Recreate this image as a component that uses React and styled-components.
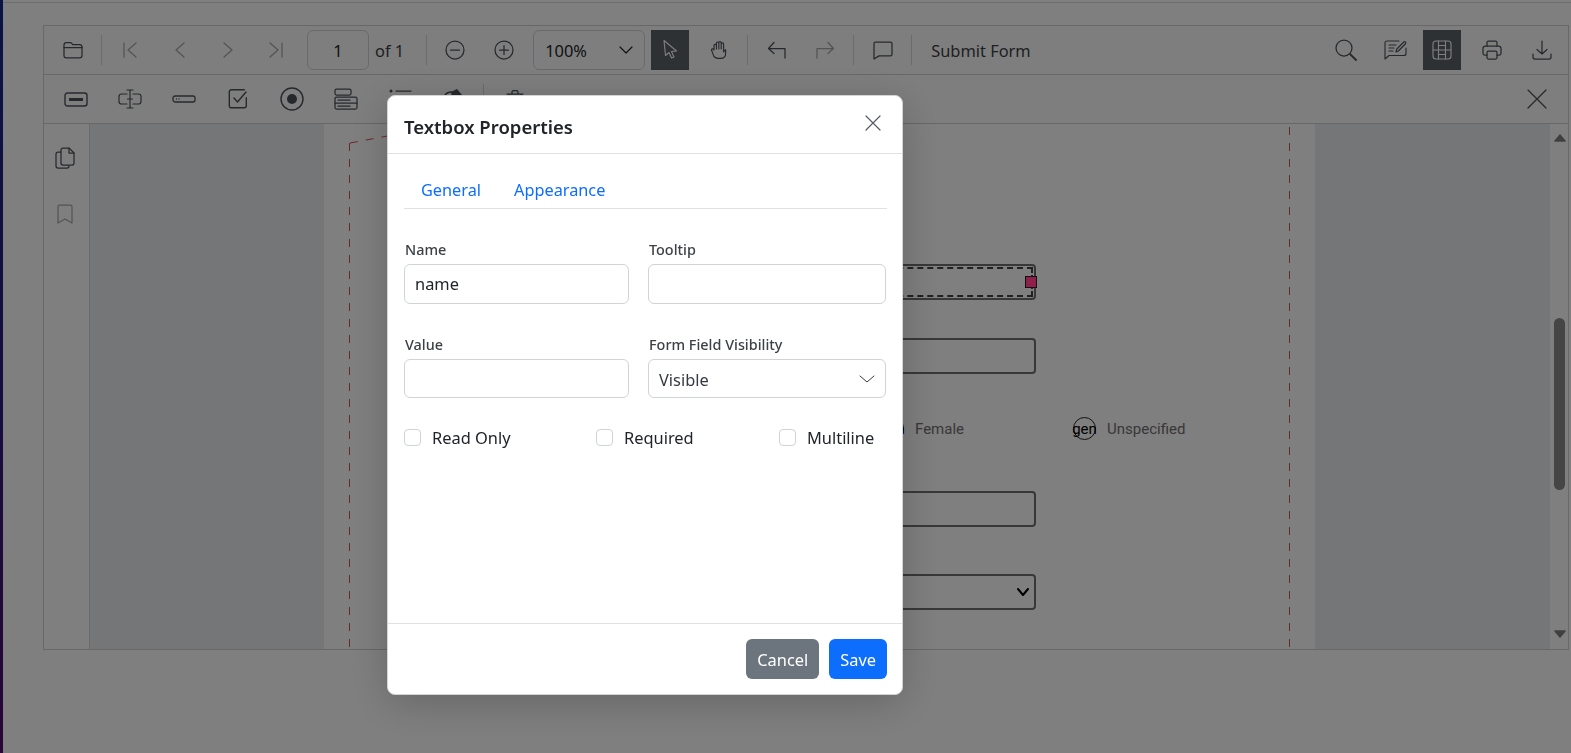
import React from 'react';
import styled, { createGlobalStyle } from 'styled-components';

const GlobalStyle = createGlobalStyle`
  html, body {
    margin: 0;
    height: 100%;
    overflow: hidden;
    background: #fff;
    font-family: "Noto Sans", "Open Sans", Arial, sans-serif;
    color: #212529;
  }
  * { box-sizing: border-box; }
`;

const Shell = styled.div`
  display: flex;
  height: 100vh;
`;

const Strip = styled.div`
  width: 3px;
  flex: none;
  background: linear-gradient(180deg, #14288c 0%, #2c1c80 50%, #500a6e 100%);
`;

const Main = styled.div`
  flex: 1;
  margin-top: 2px;
  border-top: 1px solid #dcdcdc;
  padding: 22px 2px 0 40px;
`;

const Viewer = styled.div`
  height: 625px;
  border: 1px solid #d0d0d0;
  display: flex;
  flex-direction: column;
  background: #fff;
`;

const Toolbar = styled.div`
  height: 49px;
  flex: none;
  display: flex;
  align-items: center;
  padding: 0 ${p => p.$right ?? 9}px 0 10px;
  border-bottom: 1px solid #d0d0d0;
  background: #fdfdfd;
`;

const Spacer = styled.div`
  flex: ${p => (p.$w ? `0 0 ${p.$w}px` : 1)};
`;

const ToolButton = styled.div`
  width: ${p => p.$w || 38}px;
  height: 40px;
  margin-left: ${p => p.$gap ?? 10}px;
  flex: none;
  display: flex;
  align-items: center;
  justify-content: center;
  color: ${p => (p.$active ? '#fff' : '#4c5359')};
  background: ${p => (p.$active ? '#5c6266' : 'transparent')};
  opacity: ${p => (p.$disabled ? 0.5 : 1)};
`;

const Divider = styled.div`
  width: 1px;
  height: 30px;
  flex: none;
  margin: 0 9px;
  background: #d6d6d6;
`;

const PageInput = styled.div`
  width: 62px;
  height: 40px;
  margin-left: 12px;
  border: 1px solid #ced4da;
  border-radius: 6px;
  display: flex;
  align-items: center;
  justify-content: center;
  font-size: 16.4px;
`;

const ToolText = styled.span`
  font-size: 16.4px;
  color: #3a3f44;
  margin-left: ${p => p.$gap || 0}px;
  white-space: nowrap;
`;

const ZoomSelect = styled.div`
  width: 112px;
  height: 40px;
  margin-left: 10px;
  padding: 0 11px 0 11px;
  border: 1px solid #ced4da;
  border-radius: 6px;
  display: flex;
  align-items: center;
  justify-content: space-between;
  font-size: 16.4px;
`;

const Content = styled.div`
  flex: 1;
  min-height: 0;
  display: flex;
`;

const SideBar = styled.div`
  width: 46px;
  flex: none;
  border-right: 1px solid #d6d6d6;
  display: flex;
  flex-direction: column;
  align-items: center;
  gap: 35px;
  padding: 23px 4px 0 0;
  color: #4c5359;
`;

const BookmarkWrap = styled.span`
  display: flex;
  opacity: 0.5;
`;

const Canvas = styled.div`
  flex: 1;
  min-width: 0;
  background: #e9ecef;
  overflow: hidden;
  padding-left: 234px;
`;

const PdfPage = styled.div`
  position: relative;
  width: 991px;
  height: 100%;
  background: #fff;
  overflow: hidden;
`;

const DashLine = styled.div`
  position: absolute;
  top: ${p => p.$top}px;
  bottom: 0;
  left: ${p => p.$x}px;
  width: 1px;
  background: repeating-linear-gradient(180deg, #d8504f 0 8px, transparent 8px 16px);
`;

const TopDash = styled.svg`
  position: absolute;
  left: 25px;
  top: 10px;
`;

const PdfField = styled.div`
  position: absolute;
  left: 341px;
  width: 371px;
  top: ${p => p.$y}px;
  height: 36px;
  border: 2px solid #707070;
  border-radius: 4px;
  display: flex;
  align-items: center;
  justify-content: flex-end;
  padding-right: 5px;
  color: #000;
`;

const DashInner = styled.div`
  position: absolute;
  inset: 1px;
  border: 2px dashed #444;
`;

const Handle = styled.div`
  position: fixed;
  left: 1025px;
  top: 276px;
  width: 12px;
  height: 12px;
  z-index: 60;
  background: #8f1f4b;
  border: 1px solid #111;
`;

const RadioItem = styled.div`
  position: absolute;
  top: 293px;
  left: ${p => p.$x}px;
  display: flex;
  align-items: center;
  gap: 11px;
  font-family: Roboto, Arial, sans-serif;
  font-size: 15px;
  color: #707070;
`;

const RadioCircle = styled.div`
  width: 23px;
  height: 23px;
  border: 1px solid #222;
  border-radius: 50%;
  display: flex;
  align-items: center;
  justify-content: center;
  font-size: 15px;
  color: #000;
`;

const ScrollBar = styled.div`
  width: 18px;
  flex: none;
  background: #fff;
  position: relative;
`;

const ScrollArrow = styled.svg`
  position: absolute;
  left: 3px;
  top: ${p => p.$y}px;
`;

const ScrollThumb = styled.div`
  position: absolute;
  left: 4px;
  top: 194px;
  width: 11px;
  height: 172px;
  border-radius: 6px;
  background: #8a8a8a;
`;

const Backdrop = styled.div`
  position: fixed;
  inset: 0;
  z-index: 50;
  background: rgba(0, 0, 0, 0.5);
`;

const Modal = styled.div`
  position: fixed;
  z-index: 70;
  left: 387px;
  top: 95px;
  width: 516px;
  height: 600px;
  background: #fff;
  border-radius: 8px;
  border: 1px solid #d4d4d4;
  box-shadow: 0 8px 40px rgba(0, 0, 0, 0.2);
  display: flex;
  flex-direction: column;
`;

const ModalHeader = styled.div`
  height: 58px;
  flex: none;
  padding: 0 21px 0 16px;
  border-bottom: 1px solid #dee2e6;
  display: flex;
  align-items: center;
  justify-content: space-between;
  color: #555c63;
`;

const ModalTitle = styled.h5`
  margin: 4px 0 0;
  font-size: 18.5px;
  font-weight: 600;
  color: #212529;
`;

const CloseWrap = styled.span`
  display: flex;
  margin-top: -4px;
`;

const ModalBody = styled.div`
  flex: 1;
  padding: 17px 15px 0 16px;
`;

const Tabs = styled.div`
  height: 38px;
  display: flex;
  align-items: center;
  gap: 33px;
  padding-left: 17px;
  border-bottom: 1px solid #dee2e6;
`;

const Tab = styled.span`
  font-size: 16.3px;
  color: #0d6efd;
`;

const FormGrid = styled.div`
  display: grid;
  grid-template-columns: 225px 238px;
  column-gap: 19px;
  row-gap: 30px;
  margin-top: 30px;
`;

const Field = styled.label`
  display: flex;
  flex-direction: column;
`;

const FieldLabel = styled.span`
  font-size: 14.4px;
  font-weight: 500;
  line-height: 19px;
  padding: 1px 0 0 1px;
  margin-bottom: 5px;
  color: #3c4146;
`;

const TextInput = styled.input`
  height: 39.5px;
  width: 100%;
  padding: 0 10px;
  border: 1px solid #ced4da;
  border-radius: 6px;
  font-family: inherit;
  font-size: 16.4px;
  color: #212529;
  outline: none;
`;

const SelectBox = styled.div`
  height: 39.5px;
  padding: 2px 10px 0 10px;
  border: 1px solid #ced4da;
  border-radius: 6px;
  display: flex;
  align-items: center;
  justify-content: space-between;
  font-size: 16.4px;
  color: #343a40;
`;

const CheckRow = styled.div`
  display: flex;
  margin-top: 28px;
  height: 22px;
  align-items: center;
`;

const CheckItem = styled.label`
  width: ${p => p.$w}px;
  flex: none;
  display: flex;
  align-items: center;
  gap: 11px;
  font-size: 16.4px;
`;

const CheckBox = styled.input.attrs({ type: 'checkbox' })`
  appearance: none;
  width: 17px;
  height: 17px;
  margin: 0;
  flex: none;
  border: 1px solid #ced4da;
  border-radius: 4px;
  background: #fff;
`;

const ModalFooter = styled.div`
  height: 71px;
  flex: none;
  padding: 15px 15px 0;
  border-top: 1px solid #dee2e6;
  display: flex;
  justify-content: flex-end;
  gap: 10px;
`;

const ActionButton = styled.button`
  height: 40px;
  padding: 0 11px;
  border: 0;
  border-radius: 6px;
  font-family: inherit;
  font-size: 16.4px;
  color: #fff;
  background: ${p => (p.$primary ? '#0d6efd' : '#6c757d')};
`;

const Ico = ({ w = 20, h = 20, sw = 1.25, children }) => (
  <svg
    width={w}
    height={h}
    viewBox={`0 0 ${w} ${h}`}
    fill="none"
    stroke="currentColor"
    strokeWidth={sw}
    strokeLinecap="round"
    strokeLinejoin="round"
  >
    {children}
  </svg>
);

const Chevron = ({ w = 14, h = 8, sw = 1.2 }) => (
  <Ico w={w} h={h} sw={sw}>
    <path d={`M1 1l${w / 2 - 1} ${h - 2}l${w / 2 - 1} -${h - 2}`} />
  </Ico>
);

const icons = {
  folder: <Ico><path d="M1 5c0-1.600.8-2.500 2.300-2.500h3.900c.8 0 1.200.3 1.600.8l.8 1.200h7c1.600 0 2.400.9 2.400 2.400v8.600c0 1.500-.8 2.400-2.300 2.400H3.300C1.800 17.900 1 17 1 15.500z" /><path d="M1 7.500h18" /></Ico>,
  first: <Ico w={14} h={16}><path d="M1 1v14M13 1L5 8l8 7" /></Ico>,
  prev: <Ico w={11} h={16}><path d="M10 1L2 8l8 7" /></Ico>,
  next: <Ico w={11} h={16}><path d="M1 1l8 7-8 7" /></Ico>,
  last: <Ico w={14} h={16}><path d="M13 1v14M1 1l8 7-8 7" /></Ico>,
  minus: <Ico><circle cx="10" cy="10" r="9" /><path d="M5.500 10h9" /></Ico>,
  plus: <Ico><circle cx="10" cy="10" r="9" /><path d="M5.500 10h9M10 5.500v9" /></Ico>,
  cursor: <Ico w={16} h={22} sw={1.1}><path d="M2 1.500L3.500 16.500l3.500-3 2.500 5.500 2.500-1-2.500-5.500 5-.5z" /></Ico>,
  hand: <Ico w={18} h={20} sw={1.15}><path d="M4 10V5.500a1.200 1.200 0 0 1 2.400 0V9M6.400 9V3.200a1.200 1.200 0 0 1 2.400 0V9M8.800 9V2.800a1.200 1.200 0 0 1 2.400 0V9M11.200 9V4a1.200 1.200 0 0 1 2.400 0v8c.4-1 1-2 2-2.300v3.800c0 3-2 4.900-5 4.900H8c-2.500 0-3.500-1-4.500-3L1.500 10c-.3-1.200 1.500-1.800 2.500 0" /></Ico>,
  undo: <Ico h={18}><path d="M18 17V7.500H2M7 1.500L1.500 7.500 7 12.500" /></Ico>,
  redo: <Ico h={18}><path d="M2 17V7.500h16M13 1.500l5.500 6-5.500 5" /></Ico>,
  comment: <Ico h={19}><path d="M1 2.500C1 1.500 1.700 1 2.500 1h15c.9 0 1.500.6 1.500 1.500v11c0 .8-.6 1.400-1.500 1.400H6L1 18z" /></Ico>,
  search: <Ico w={22} h={22} sw={1.25}><circle cx="9" cy="9" r="8" /><path d="M15 15l6 6" strokeWidth="1.800" /></Ico>,
  form: <Ico w={23} h={20} sw={1.15}><path d="M15 1H3c-1.200 0-2 .8-2 2v16l4-3.500h15c1.200 0 2-.8 2-2V8" /><path d="M5 5h7M5 8h5M5 11h4" /><path d="M12 12l.8-3 7-7c.8-.7 2-.2 2 1 0 .4-.2.7-.5 1l-7 7z" /></Ico>,
  grid: <Ico w={20} h={20} sw={1.1}><rect x="1" y="1" width="18" height="18" rx="3" /><path d="M6.500 1v18M13.500 1v18M1 10h18M6.500 5.500h7M6.500 14.500h7" /></Ico>,
  print: <Ico w={20} h={20}><path d="M5 6V2.500C5 1.500 5.700 1 6.500 1h7c.9 0 1.500.5 1.500 1.500V6" /><path d="M5 15H2.500C1.500 15 1 14.300 1 13.500v-5C1 7 2 6 3.500 6h13C18 6 19 7 19 8.500v5c0 .8-.6 1.500-1.500 1.500H15" /><rect x="5" y="11" width="10" height="8" rx="1.500" /></Ico>,
  download: <Ico w={20} h={20}><path d="M10 1v13M5 9.500l5 4.500 5-4.500M1 14v3c0 1 .7 2 2 2h14c1.300 0 2-1 2-2v-3" /></Ico>,
  textbox: <Ico w={24} h={15} sw={1.4}><rect x="1" y="1" width="22" height="13" rx="2.500" /><path d="M5 7.500h14" strokeWidth="3" strokeLinecap="butt" /></Ico>,
  password: <Ico w={24} h={20} sw={1.2}><path d="M9 5H3.500C2 5 1 6 1 7.500v5C1 14 2 15 3.500 15H9M15 5h5.500C22 5 23 6 23 7.500v5c0 1.500-1 2.500-2.500 2.500H15" /><path d="M9 1h2.500L12 2l.5-1H15M9 19h2.500l.5-1 .5 1H15M12 2v16M9.500 10h5" /></Ico>,
  smallbox: <Ico w={24} h={8} sw={1.3}><rect x="1" y="1" width="22" height="6" rx="2" /><path d="M4.500 4h.01M7 4h.01" /></Ico>,
  check: <Ico w={20} h={20} sw={1.4}><path d="M18 9v8c0 1-.7 2-2 2H3c-1.300 0-2-1-2-2V3c0-1 .7-2 2-2h13" transform="translate(.3 -.2)" /><path d="M6 9l3.500 4 8.500-10" /></Ico>,
  radio: <Ico w={24} h={24} sw={1.4}><circle cx="12" cy="12" r="11" /><circle cx="12" cy="12" r="5" fill="currentColor" stroke="none" /></Ico>,
  listbox: <Ico w={24} h={22}><rect x="1" y="1" width="16" height="6" rx="1.500" /><rect x="1" y="9" width="22" height="12" rx="1.500" /><path d="M1 15h22M4 12h12M4 18h12" /></Ico>,
  list: <Ico w={24} h={22}><path d="M3 3h.01M3 10h.01M3 17h.01" strokeWidth="3" /><path d="M8 3h15M8 10h15M8 17h15" /></Ico>,
  sign: <svg width="20" height="22" viewBox="0 0 20 22" fill="currentColor"><path d="M8 4l6-3 5 6-3 3H9z" /><path d="M1 9c1-3 3-5 8-5" fill="none" stroke="currentColor" strokeWidth="1.300" /></svg>,
  trash: <Ico w={18} h={20}><path d="M1 5h16M6 5V3c0-.8.7-1.500 1.500-1.500h3c.8 0 1.500.7 1.500 1.500v2M3 5v12c0 1 1 2 2 2h8c1 0 2-1 2-2V5" /></Ico>,
  close: <Ico w={20} h={20}><path d="M1 1l18 18M19 1L1 19" /></Ico>,
};

const ArrowShape = ({ y, d }) => (
  <ScrollArrow $y={y} width="14" height="10" viewBox="0 0 14 10">
    <path d={d} fill="#808080" stroke="#808080" strokeWidth="1.500" strokeLinejoin="round" />
  </ScrollArrow>
);

const App = () => (
  <>
    <GlobalStyle />
    <Shell>
      <Strip />
      <Main>
        <Viewer>
          <Toolbar $right={7}>
            <ToolButton $gap={0}>{icons.folder}</ToolButton>
            <Divider />
            <ToolButton $gap={0} $disabled>{icons.first}</ToolButton>
            <ToolButton $gap={11} $disabled>{icons.prev}</ToolButton>
            <ToolButton $gap={11} $disabled>{icons.next}</ToolButton>
            <ToolButton $disabled>{icons.last}</ToolButton>
            <PageInput>1</PageInput>
            <ToolText $gap={6}>of 1</ToolText>
            <Spacer $w={13} />
            <Divider />
            <ToolButton $gap={0}>{icons.minus}</ToolButton>
            <ToolButton $gap={11}>{icons.plus}</ToolButton>
            <ZoomSelect>100%<Chevron /></ZoomSelect>
            <ToolButton $gap={6} $active>{icons.cursor}</ToolButton>
            <ToolButton $gap={11}>{icons.hand}</ToolButton>
            <Divider />
            <ToolButton $gap={1}>{icons.undo}</ToolButton>
            <ToolButton $gap={10} $disabled>{icons.redo}</ToolButton>
            <Divider />
            <ToolButton $gap={1}>{icons.comment}</ToolButton>
            <Divider />
            <ToolText $gap={10}>Submit Form</ToolText>
            <Spacer />
            <ToolButton>{icons.search}</ToolButton>
            <ToolButton $gap={11}>{icons.form}</ToolButton>
            <ToolButton $gap={9} $active>{icons.grid}</ToolButton>
            <ToolButton $gap={12}>{icons.print}</ToolButton>
            <ToolButton $gap={12}>{icons.download}</ToolButton>
          </Toolbar>
          <Toolbar>
            <ToolButton $w={44} $gap={0}>{icons.textbox}</ToolButton>
            <ToolButton $w={44}>{icons.password}</ToolButton>
            <ToolButton $w={44}>{icons.smallbox}</ToolButton>
            <ToolButton $w={44}>{icons.check}</ToolButton>
            <ToolButton $w={44}>{icons.radio}</ToolButton>
            <ToolButton $w={44}>{icons.listbox}</ToolButton>
            <ToolButton $w={44}>{icons.list}</ToolButton>
            <ToolButton $w={42}>{icons.sign}</ToolButton>
            <Divider />
            <ToolButton $w={44} $gap={0}>{icons.trash}</ToolButton>
            <Spacer />
            <ToolButton $w={44}>{icons.close}</ToolButton>
          </Toolbar>
          <Content>
            <SideBar>
              <Ico w={20} h={22}><path d="M6 15V3c0-1.200.8-2 2-2h6l5 5v10c0 1.200-.8 2-2 2H8c-1.200 0-2-.8-2-2z" /><path d="M14 1v5h5" /><path d="M6 5H3C1.800 5 1 5.800 1 7v12c0 1.200.8 2 2 2h9c1.200 0 2-.8 2-2" /></Ico>
              <BookmarkWrap>
                <Ico w={16} h={20}><path d="M1 2.500C1 1.500 1.700 1 2.500 1h11c.8 0 1.500.5 1.500 1.500V19l-7-4-7 4z" /></Ico>
              </BookmarkWrap>
            </SideBar>
            <Canvas>
              <PdfPage>
                <TopDash width="60" height="12" viewBox="0 0 60 12" fill="none">
                  <path d="M1 9L60 -2" stroke="#d8504f" strokeDasharray="8 8" />
                </TopDash>
                <DashLine $x={25} $top={19} />
                <DashLine $x={965} $top={3} />
                <PdfField $y={140}><DashInner /></PdfField>
                <Handle />
                <PdfField $y={214} />
                <RadioItem $x={557}><RadioCircle>gen</RadioCircle>Female</RadioItem>
                <RadioItem $x={749}><RadioCircle>gen</RadioCircle>Unspecified</RadioItem>
                <PdfField $y={367} />
                <PdfField $y={450}>
                  <Chevron w={12} h={8} sw={2} />
                </PdfField>
              </PdfPage>
            </Canvas>
            <ScrollBar>
              <ArrowShape y={9} d="M7 2L12 8H2z" />
              <ScrollThumb />
              <ArrowShape y={505} d="M2 2h10L7 8z" />
            </ScrollBar>
          </Content>
        </Viewer>
      </Main>
    </Shell>
    <Backdrop />
    <Modal>
      <ModalHeader>
        <ModalTitle>Textbox Properties</ModalTitle>
        <CloseWrap>
          <Ico w={16} h={16} sw={1.2}><path d="M1 1l14 14M15 1L1 15" /></Ico>
        </CloseWrap>
      </ModalHeader>
      <ModalBody>
        <Tabs>
          <Tab>General</Tab>
          <Tab>Appearance</Tab>
        </Tabs>
        <FormGrid>
          <Field>
            <FieldLabel>Name</FieldLabel>
            <TextInput value="name" readOnly />
          </Field>
          <Field>
            <FieldLabel>Tooltip</FieldLabel>
            <TextInput value="" readOnly />
          </Field>
          <Field>
            <FieldLabel>Value</FieldLabel>
            <TextInput value="" readOnly />
          </Field>
          <Field>
            <FieldLabel>Form Field Visibility</FieldLabel>
            <SelectBox>Visible<Chevron w={16} h={8} sw={1} /></SelectBox>
          </Field>
        </FormGrid>
        <CheckRow>
          <CheckItem $w={192}><CheckBox />Read Only</CheckItem>
          <CheckItem $w={183}><CheckBox />Required</CheckItem>
          <CheckItem $w={107}><CheckBox />Multiline</CheckItem>
        </CheckRow>
      </ModalBody>
      <ModalFooter>
        <ActionButton>Cancel</ActionButton>
        <ActionButton $primary>Save</ActionButton>
      </ModalFooter>
    </Modal>
  </>
);

export default App;
